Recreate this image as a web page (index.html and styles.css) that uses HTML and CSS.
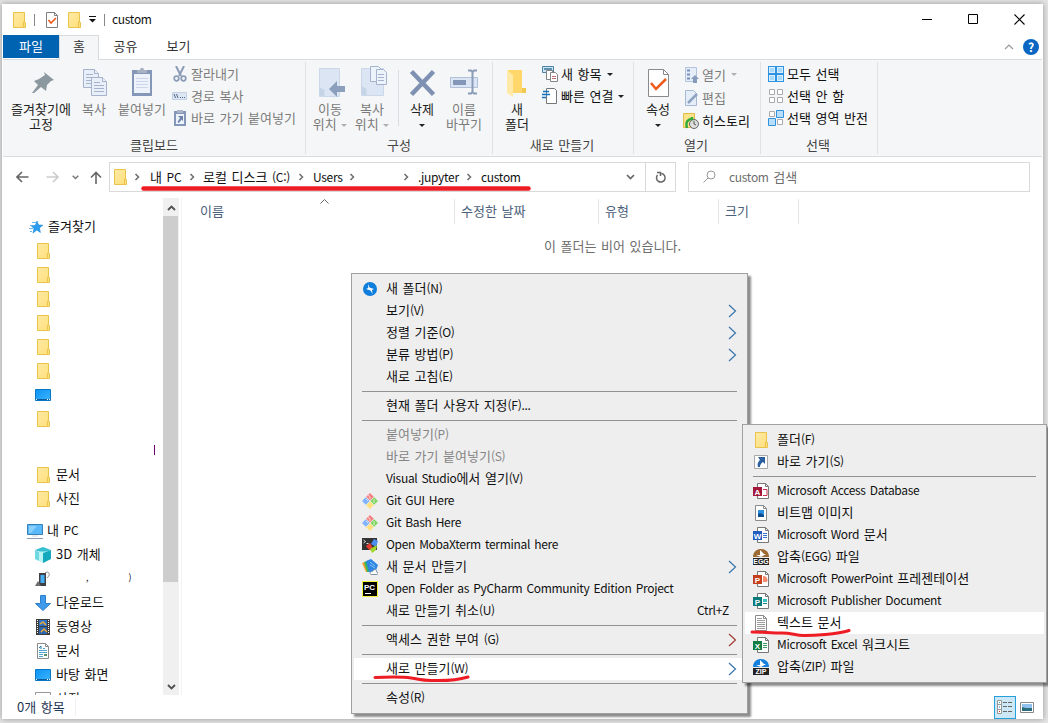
FILE: index.html
```html
<!DOCTYPE html>
<html lang="ko">
<head>
    <meta charset="UTF-8">
    <meta name="viewport" content="width=device-width, initial-scale=1.0">
    <title>custom</title>
    <link rel="stylesheet" href="styles.css">
</head>
<body>

<!-- shared icons -->
<svg class="defs" width="0" height="0">
    <linearGradient id="gFolder" x1="0" y1="0" x2="1" y2="1"><stop offset="0" stop-color="#ffeaa5"/><stop offset="1" stop-color="#ffdf7a"/></linearGradient>
    <linearGradient id="gScreen" x1="0" y1="0" x2="1" y2="1"><stop offset="0" stop-color="#0a94f5"/><stop offset="1" stop-color="#3fb4ff"/></linearGradient>
    <symbol id="folder" viewBox="0 0 16 16">
        <path d="M2.500.5h11v10h1v5h-12z" fill="url(#gFolder)" stroke="#e9c34b"/>
        <path d="M12.500 15v-5h1" fill="none" stroke="#e9c34b"/>
    </symbol>
    <symbol id="desktop" viewBox="0 0 16 16">
        <path d="M.5 2.500h15v11H.5z" fill="url(#gScreen)" stroke="#0b76c4"/>
        <path d="M1 12.500h14" stroke="#0a5c9c"/><path d="M1 12.500h1m10 0h1m1 0h1" stroke="#fff"/>
    </symbol>
    <symbol id="chev" viewBox="0 0 6 8"><path d="M1.500 1l3 3-3 3" fill="none" stroke="#6d6d6d" stroke-width="1.500"/></symbol>
    <symbol id="arrow" viewBox="0 0 9 14"><path d="M1 1l6.500 6L1 13" fill="none" stroke="currentColor" stroke-width="1.200"/></symbol>
    <symbol id="git" viewBox="0 0 16 16">
        <path d="M8 0l3.800 3.800L8 7.600 4.200 3.800z" fill="#f98080"/><path d="M12.200 4.200L16 8l-3.800 3.800L8.400 8z" fill="#80d860"/>
        <path d="M3.800 4.200L7.600 8l-3.800 3.800L0 8z" fill="#80b3ff"/><path d="M8 8.400l3.800 3.800L8 16l-3.800-3.800z" fill="#ffe080"/>
        <path d="M6 2l2 2v2M12 6v4M4 6l2 2" stroke="#eee" stroke-width=".8" fill="none"/>
    </symbol>
    <symbol id="sheet" viewBox="0 0 16 16"><path d="M4.500.5h8l3 3v12h-11z" fill="#fff" stroke="#777"/><path d="M12.500.5v3h3" fill="none" stroke="#777"/></symbol>
    <symbol id="page" viewBox="0 0 16 16"><path d="M2.500.5h8l3 3v12h-11z" fill="#fff" stroke="#8b8b8b"/><path d="M10.500.5v3h3" fill="none" stroke="#8b8b8b"/></symbol>
    <symbol id="check" viewBox="0 0 12 16"><path d="M.5.5h8l3 3v12H.5z" fill="#fff" stroke="#7d7d7d"/><path d="M8.500.5v3h3" fill="none" stroke="#7d7d7d"/><path d="M2.500 8l2.500 3 5-5" fill="none" stroke="#ee5a1c" stroke-width="1.700"/></symbol>
</svg>

<div class="window">
    <div class="titlebar">
        <svg class="i16" width="16" height="16"><use href="#folder"/></svg>
        <span class="bar first"></span>
        <svg class="checkicon" width="12" height="16"><use href="#check"/></svg>
        <svg class="i16 second" width="16" height="16"><use href="#folder"/></svg>
        <svg class="quick" width="8" height="7" viewBox="0 0 8 7"><path d="M0 .5h7" stroke="#111"/><path d="M0 3h7L3.500 6.500z" fill="#111"/></svg>
        <span class="bar"></span>
        <span class="title en">custom</span>
        <div class="controls">
            <svg width="11" height="11" viewBox="0 0 11 11"><path d="M0 5.500h10" stroke="#000"/></svg>
            <svg width="11" height="11" viewBox="0 0 11 11"><path d="M.5.5h9v9h-9z" fill="none" stroke="#000"/></svg>
            <svg width="11" height="11" viewBox="0 0 11 11"><path d="M.5.5l10 10m0-10l-10 10" stroke="#000" stroke-width="1.100"/></svg>
        </div>
    </div>

    <div class="tabs">
        <div class="tab file">파일</div>
        <div class="tab active">홈</div>
        <div class="tab">공유</div>
        <div class="tab">보기</div>
        <div class="tabtools">
            <svg width="10" height="6" viewBox="0 0 10 6"><path d="M1 5l4-4 4 4" fill="none" stroke="#999" stroke-width="1.200"/></svg>
            <span class="help">?</span>
        </div>
    </div>

    <div class="ribbon">
        <div class="group clipboard">
            <div class="tools">
                <div class="big w70">
                    <svg width="32" height="32" viewBox="0 0 32 32"><path d="M19 6l10 8-3 1-4 4-1 6-5-4-7 6-2 0 6-8-4-4 5-2 6-4z" fill="#8b989f"/></svg>
                    <span>즐겨찾기에<br>고정</span>
                </div>
                <div class="big off w36">
                    <svg width="32" height="32" viewBox="0 0 32 32"><g fill="#e9eff8" stroke="#a5b4cc"><path d="M5.500 3.500h11l4 4v14h-15z"/><path d="M16.500 3.500v4h4M8 8.500h7m-7 3h10m-10 3h10m-10 3h10"/><path d="M13.500 11.500h11l4 4v14h-15z"/><path d="M24.500 11.500v4h4M16 16.500h6m-6 3h10m-10 3h10m-10 3h10"/></g></svg>
                    <span>복사</span>
                </div>
                <div class="big off w60">
                    <svg width="32" height="32" viewBox="0 0 32 32"><path d="M6 4h20v26H6z" fill="#8497b8"/><path d="M8 8h16v19H8z" fill="#eef3fb"/><path d="M10 12.500h12m-12 3h12m-12 3h12m-12 3h12" stroke="#cbd7e9"/><path d="M11 7V4h3c0-3 4-3 4 0h3v3z" fill="#a7b2c2"/></svg>
                    <span>붙여넣기</span>
                </div>
                <div class="smalls off">
                    <div><svg width="16" height="16" viewBox="0 0 16 16"><path d="M4 0l5 10M12 0L7 10" stroke="#8b9cb8" stroke-width="2"/><g fill="none" stroke="#8b9cb8" stroke-width="1.700"><circle cx="4.500" cy="12.500" r="2.300"/><circle cx="11.500" cy="12.500" r="2.300"/></g></svg>잘라내기</div>
                    <div><svg width="16" height="16" viewBox="0 0 16 16"><path d="M.5 4.500h14v7H.5z" fill="#dde6f3" stroke="#c4d1e4"/><path d="M2 6l1.500 4M4.500 6L6 10M8 9.500h1m1 0h1m1 0h1" stroke="#51658c"/></svg>경로 복사</div>
                    <div><svg width="16" height="16" viewBox="0 0 16 16"><path d="M2 1h12v15H2z" fill="#8497b8"/><path d="M4 4h8v10H4z" fill="#eef3fb"/><path d="M5 0h6v3H5z" fill="#a9b5c7"/><path d="M6 6h5v5L9.500 9.500 7 13 5.500 12 8 8z" fill="#6d83ab"/></svg>바로 가기 붙여넣기</div>
                </div>
            </div>
            <div class="label">클립보드</div>
        </div>

        <div class="group organize">
            <div class="tools">
                <div class="big off w42">
                    <svg width="32" height="32" viewBox="0 0 32 32"><path d="M5.500 2.500h20v28h-20z" fill="#dce5f3" stroke="#cbd8ea"/><path d="M5.500 21l5 3v6h-5z" fill="#c6d4e8"/><path d="M15 23l8-8v5h8v6h-8v5z" fill="#8c9fbd"/></svg>
                    <span>이동<br>위치 <i class="dd"></i></span>
                </div>
                <div class="big off w42">
                    <svg width="32" height="32" viewBox="0 0 32 32"><path d="M5.500 2.500h22v27h-22z" fill="#dce5f3" stroke="#cbd8ea"/><path d="M5.500 20l5 3v6h-5z" fill="#c6d4e8"/><g fill="#edf3fb" stroke="#a5b4cc"><path d="M14.500.5h8l3 3v12h-11z"/><path d="M20.500 3.500h7l3 3v12h-10z"/><path d="M22 8.500h6m-6 3h6m-6 3h6"/></g></svg>
                    <span>복사<br>위치 <i class="dd"></i></span>
                </div>
                <div class="vline"></div>
                <div class="big w46">
                    <svg width="32" height="32" viewBox="0 0 32 32"><path d="M5.500 5.500l22 23m0-23l-22 23" stroke="#7f91b2" stroke-width="4.500"/></svg>
                    <span>삭제<br><i class="dd"></i></span>
                </div>
                <div class="big off w38">
                    <svg width="32" height="32" viewBox="0 0 32 32"><path d="M2.500 11.500h27v10h-27z" fill="#dce5f3" stroke="#b1c1da"/><path d="M5 14h13v5H5z" fill="#8497b8"/><path d="M20 4.500h3l1.500 1.500v20L23 27.500h-3m9-23h-3L24.500 6m0 20l1.500 1.500h3" fill="none" stroke="#8b9cb9" stroke-width="2"/></svg>
                    <span>이름<br>바꾸기</span>
                </div>
            </div>
            <div class="label">구성</div>
        </div>

        <div class="group create">
            <div class="tools">
                <div class="big w36">
                    <svg width="32" height="32" viewBox="0 0 32 32"><path d="M7 4h14v18l4 1v4H7z" fill="#ffd76b"/><path d="M6 4l6 5v22l-6-4z" fill="#ffe9a6"/><path d="M21 22h4v5h-4z" fill="#f2c94f"/></svg>
                    <span>새<br>폴더</span>
                </div>
                <div class="smalls">
                    <div><svg width="16" height="16" viewBox="0 0 16 16"><path d="M.5.5h11v6H.5z" fill="#cce6f7" stroke="#4e82a3"/><path d="M2 3h8" stroke="#5e91b0" stroke-width="2"/><g fill="#fff" stroke="#858585"><path d="M4.500 4.500h6v9h-6z"/><path d="M8.500 6.500h5l2 2v7h-7z"/></g><path d="M10 10.500h4m-4 2h4" stroke="#b86f75"/></svg>새 항목<i class="dd"></i></div>
                    <div><svg width="16" height="16" viewBox="0 0 16 16"><path d="M4.500.5h8l2 2v13h-10z" fill="#fff" stroke="#777"/><path d="M0 6.500h8M1 3.500h6M0 9.500h4" stroke="#1673c0" stroke-width="1.400"/></svg>빠른 연결<i class="dd"></i></div>
                </div>
            </div>
            <div class="label">새로 만들기</div>
        </div>

        <div class="group open">
            <div class="tools">
                <div class="big w36">
                    <svg width="32" height="32" viewBox="0 0 32 32"><path d="M6.500 3.500h15l5 5v22h-20z" fill="#fff" stroke="#8a8a8a"/><path d="M21.500 3.500v5h5" fill="none" stroke="#8a8a8a"/><path d="M9 17l5 6 10-10" fill="none" stroke="#ee5a1c" stroke-width="2.500"/></svg>
                    <span>속성<br><i class="dd"></i></span>
                </div>
                <div class="smalls">
                    <div class="off"><svg width="16" height="16" viewBox="0 0 16 16"><path d="M2.500.5h11v14h-11z" fill="#e5edf8" stroke="#b3c3dc"/><path d="M4 3.500h3m-3 4h3m-3 4h3" stroke="#7890b8" stroke-width="2"/><path d="M12 8l4 4h-2v4h-4v-4H8z" fill="#879bbd"/></svg>열기<i class="dd"></i></div>
                    <div class="off"><svg width="16" height="16" viewBox="0 0 16 16"><path d="M2.500.5h8l3 3v12h-11z" fill="#e5edf8" stroke="#a8b9d4"/><path d="M5 13l9-9" stroke="#8ea2c2" stroke-width="2.500"/></svg>편집</div>
                    <div><svg width="16" height="16" viewBox="0 0 16 16"><path d="M.5.5h11v14H.5z" fill="#ffe38b" stroke="#e3bd4a"/><circle cx="11" cy="11" r="4.500" fill="#dedede" stroke="#666"/><path d="M11 8v3l2 1" fill="none" stroke="#555"/><path d="M4 15c-2-7 2-9 5-9V4" fill="none" stroke="#35aa3c" stroke-width="2.500"/></svg>히스토리</div>
                </div>
            </div>
            <div class="label">열기</div>
        </div>

        <div class="group select">
            <div class="tools">
                <div class="smalls">
                    <div><svg width="16" height="16" viewBox="0 0 16 16"><path d="M0 0h16v16H0z" fill="#2f92e0"/><path d="M1 1h6v6H1zM9 1h6v6H9zM1 9h6v6H1zM9 9h6v6H9z" fill="#d9efff"/><path d="M2 2h4v4H2zM10 2h4v4h-4zM2 10h4v4H2zM10 10h4v4h-4z" fill="#a9d9fb"/></svg>모두 선택</div>
                    <div><svg width="16" height="16" viewBox="0 0 16 16"><path d="M1.500 1.500h5v5h-5zM9.500 1.500h5v5h-5zM1.500 9.500h5v5h-5zM9.500 9.500h5v5h-5z" fill="#fff" stroke="#ababab"/></svg>선택 안 함</div>
                    <div><svg width="16" height="16" viewBox="0 0 16 16"><path d="M1.500 1.500h5v5h-5zM9.500 9.500h5v5h-5z" fill="#fff" stroke="#ababab"/><path d="M8.500.5h7v7h-7zM.5 8.500h7v7h-7z" fill="#b7dffb" stroke="#2f92e0"/></svg>선택 영역 반전</div>
                </div>
            </div>
            <div class="label">선택</div>
        </div>
    </div>

    <div class="navbar">
        <div class="navbtns">
            <svg width="13" height="12" viewBox="0 0 13 12"><path d="M12.500 6H1.500M6 1L1 6l5 5" fill="none" stroke="#666" stroke-width="1.600"/></svg>
            <svg width="13" height="12" viewBox="0 0 13 12"><path d="M.5 6h11M7 1l5 5-5 5" fill="none" stroke="#ccc" stroke-width="1.600"/></svg>
            <svg width="7" height="5" viewBox="0 0 7 5"><path d="M.7.7l2.800 2.800L6.300.7" fill="none" stroke="#777" stroke-width="1.500"/></svg>
            <svg width="12" height="13" viewBox="0 0 12 13"><path d="M6 13V1.500M1 6.500l5-5 5 5" fill="none" stroke="#666" stroke-width="1.600"/></svg>
        </div>
        <div class="address">
            <svg class="i16" width="16" height="16"><use href="#folder"/></svg>
            <svg class="chev c1" width="6" height="8"><use href="#chev"/></svg>
            <span class="crumb pc">내 <span class="en">PC</span></span>
            <svg class="chev" width="6" height="8"><use href="#chev"/></svg>
            <span class="crumb disk">로컬 디스크 <span class="en">(C:)</span></span>
            <svg class="chev" width="6" height="8"><use href="#chev"/></svg>
            <span class="crumb users en">Users</span>
            <svg class="chev" width="6" height="8"><use href="#chev"/></svg>
            <span class="crumb hidden"></span>
            <svg class="chev" width="6" height="8"><use href="#chev"/></svg>
            <span class="crumb jup en">.jupyter</span>
            <svg class="chev" width="6" height="8"><use href="#chev"/></svg>
            <span class="crumb en">custom</span>
            <svg class="drop" width="9" height="6" viewBox="0 0 9 6"><path d="M1 1l3.500 3.500L8 1" fill="none" stroke="#666" stroke-width="1.700"/></svg>
            <span class="refresh"><svg width="12" height="13" viewBox="0 0 12 13"><path d="M2.500 4a4.300 4.300 0 1 0 4-1.500M2 1.500h3.500V5" fill="none" stroke="#666" stroke-width="1.500"/></svg></span>
            <svg class="mark" width="390" height="6" viewBox="0 0 390 6"><path d="M2.500 2.500h385" stroke="#ee1c25" stroke-width="4.500" stroke-linecap="round"/></svg>
        </div>
        <div class="search">
            <svg width="13" height="13" viewBox="0 0 13 13"><circle cx="8" cy="5" r="4" fill="none" stroke="#999"/><path d="M5 8l-4.500 4.500" stroke="#999"/></svg>
            <span><span class="en">custom</span> 검색</span>
        </div>
    </div>

    <div class="body">
        <div class="tree">
            <div class="row root"><svg width="16" height="16" viewBox="0 0 16 16"><path d="M9 2l1.500 4 4.300.2-3.400 2.700 1 4.600-3.600-2.500L5 14l1-4.500L3.500 7l4-.8z" fill="#2a9df0" stroke="#1784d8" stroke-width=".6"/><path d="M4 3.500h4M2 6.500h3M1 9.500h4M2 12.500h2" stroke="#63b7ee"/></svg>즐겨찾기</div>
            <div class="row"><svg width="16" height="16"><use href="#folder"/></svg></div>
            <div class="row"><svg width="16" height="16"><use href="#folder"/></svg></div>
            <div class="row"><svg width="16" height="16"><use href="#folder"/></svg></div>
            <div class="row"><svg width="16" height="16"><use href="#folder"/></svg></div>
            <div class="row"><svg width="16" height="16"><use href="#folder"/></svg></div>
            <div class="row"><svg width="16" height="16"><use href="#folder"/></svg></div>
            <div class="row"><svg width="16" height="16"><use href="#desktop"/></svg></div>
            <div class="row"><svg width="16" height="16"><use href="#folder"/></svg></div>
            <div class="rest"><span></span></div>
            <div class="row"><svg width="16" height="16"><use href="#folder"/></svg>문서</div>
            <div class="row"><svg width="16" height="16"><use href="#folder"/></svg>사진</div>
            <div class="row root pcroot"><svg width="16" height="16" viewBox="0 0 16 16"><path d="M.5 1.500h15v10H.5z" fill="#58b8f8" stroke="#3580b4"/><path d="M2 3h8L4 10H2z" fill="#8bd0fc"/><path d="M5 13h6" stroke="#ccd6e0"/><path d="M0 15.500h16" stroke="#8a9db3"/></svg><span>내 <span class="en">PC</span></span></div>
            <div class="row"><svg width="16" height="16" viewBox="0 0 16 16"><path d="M0 3l8-3 8 3-8 3z" fill="#35bfd0"/><path d="M0 3l4 2v9l-4-2z" fill="#6fd9e2"/><path d="M4 4.500h8V14l-4 2-4-2z" fill="#bdf3f5"/><path d="M16 3L8 6v10l8-4z" fill="#14a9bd"/></svg>3D 개체</div>
            <div class="row phone"><svg width="16" height="16" viewBox="0 0 16 16"><path d="M4 2h7v13H4z" fill="#3e4247"/><path d="M5.500 4h4v8h-4z" fill="#45aef5"/><path d="M10 2c4-3 6 2 2 5" fill="none" stroke="#8b8b8b"/><path d="M0 15l3-5 3 5z" fill="#6d6d6d"/></svg><span class="frag">,</span><span class="frag end">)</span></div>
            <div class="row"><svg width="16" height="16" viewBox="0 0 16 16"><path d="M5.500.5h5v8h5L8 15.500.5 8.500h5z" fill="#3d9aec" stroke="#2f7fc9"/></svg>다운로드</div>
            <div class="row"><svg width="16" height="16" viewBox="0 0 16 16"><path d="M1 0h14v16H1z" fill="#3c3c3c"/><path d="M4 1h8v6H4z" fill="#3274c4"/><path d="M4 8h8v7H4z" fill="#2c66b0"/><path d="M5 5l3-2 3 3M6 13l3-3 3 3" stroke="#e4a93a" stroke-width="1.500" fill="none"/><path d="M2.500 1v14M13.500 1v14" stroke="#fff" stroke-dasharray="1 1"/></svg>동영상</div>
            <div class="row"><svg width="16" height="16"><use href="#page"/><path d="M4 7.500h8M4 9.500h8M4 11.500h4M4 13.500h4M8 5.500h2" stroke="#4ba3cf"/><path d="M4 5l2-2v3" stroke="#2478aa" fill="none"/><path d="M9 11h3v2H9z" fill="#57906b"/></svg>문서</div>
            <div class="row"><svg width="16" height="16"><use href="#desktop"/></svg>바탕 화면</div>
            <div class="row"><svg width="16" height="16" viewBox="0 0 16 16"><path d="M.5 1.500h15v12H.5z" fill="#fff" stroke="#999"/></svg>사진</div>
        </div>
        <div class="scroll">
            <svg width="9" height="6" viewBox="0 0 9 6"><path d="M1 5l3.500-3.500L8 5" fill="none" stroke="#505050" stroke-width="1.800"/></svg>
            <div class="thumb"></div>
            <svg width="9" height="6" viewBox="0 0 9 6"><path d="M1 1l3.500 3.500L8 1" fill="none" stroke="#505050" stroke-width="1.800"/></svg>
        </div>
        <div class="files">
            <div class="cols">
                <div class="c-name">이름<svg width="9" height="5" viewBox="0 0 9 5"><path d="M.5 4.500l4-4 4 4" fill="none" stroke="#666"/></svg></div>
                <div class="c-date">수정한 날짜</div>
                <div class="c-type">유형</div>
                <div class="c-size">크기</div>
            </div>
            <div class="empty">이 폴더는 비어 있습니다.</div>
        </div>
    </div>

    <div class="status">
        <span class="count">0개 항목</span>
        <div class="views">
            <span class="view on"><svg width="16" height="14" viewBox="0 0 16 14"><path d="M.5.500h4v13h-4zM.5 4.500h4M.5 9.500h4" fill="#fff" stroke="#999"/><path d="M6 2.500h4m1 0h4m-9 4h4m1 0h4m-9 5h4m1 0h4" stroke="#666"/><path d="M2 2.500h1" stroke="#3a9"/><path d="M2 7h1" stroke="#27f"/><path d="M2 11.500h1" stroke="#e22"/></svg></span>
            <span class="view"><svg width="14" height="11" viewBox="0 0 14 11"><path d="M.5.5h13v10H.5z" fill="#fff" stroke="#888"/><path d="M2 2h10v7H2z" fill="#8fc2ee"/><path d="M2 5l4 1 6 0v3H2z" fill="#2c6d7d"/></svg></span>
        </div>
    </div>
</div>

<div class="menu main">
    <div class="item"><svg class="ic" width="16" height="16" viewBox="0 0 16 16"><circle cx="8" cy="8" r="7" fill="#0f7ddb"/><path d="M6 3l1.500 3.500L12 8l-2 1 .5 4L8.500 9.500 4 8l2.300-1z" fill="#fff"/></svg>새 폴더<span class="en">(N)</span></div>
    <div class="item">보기<span class="en">(V)</span><svg class="sub" width="9" height="14"><use href="#arrow"/></svg></div>
    <div class="item">정렬 기준<span class="en">(O)</span><svg class="sub" width="9" height="14"><use href="#arrow"/></svg></div>
    <div class="item">분류 방법<span class="en">(P)</span><svg class="sub" width="9" height="14"><use href="#arrow"/></svg></div>
    <div class="item">새로 고침<span class="en">(E)</span></div>
    <hr>
    <div class="item">현재 폴더 사용자 지정<span class="en">(F)...</span></div>
    <hr>
    <div class="item off">붙여넣기<span class="en">(P)</span></div>
    <div class="item off">바로 가기 붙여넣기<span class="en">(S)</span></div>
    <div class="item"><span class="en">Visual Studio</span>에서 열기<span class="en">(V)</span></div>
    <div class="item"><svg class="ic" width="16" height="16"><use href="#git"/></svg><span class="en">Git GUI Here</span></div>
    <div class="item"><svg class="ic" width="16" height="16"><use href="#git"/></svg><span class="en">Git Bash Here</span></div>
    <div class="item"><svg class="ic" width="16" height="16" viewBox="0 0 16 16"><path d="M0 1h15v12H0z" fill="#333"/><path d="M1.500 3l2 1.500-2 1.500M4.500 6.500h2" stroke="#ddd" fill="none"/><path d="M4 9l4-3 3 5-4 2z" fill="#e63b32"/><path d="M9 7l3-5 4 2-2 6z" fill="#4b8df0"/><path d="M8 12l7-4-1 5-4 3z" fill="#9ed62c"/></svg><span class="en">Open MobaXterm terminal here</span></div>
    <div class="item"><svg class="ic" width="16" height="16" viewBox="0 0 16 16"><path d="M0 4l3-1 3 10-2 0z" fill="#f0a22c"/><path d="M2 3l3-1 3 11-3 0z" fill="#38b45e"/><path d="M4 2l5-2 7 6-3 8-6-1z" fill="#2d86e3"/><path d="M8 3l5 4M8 6l5 3" stroke="#8ac3f7"/><path d="M9 15.500c-2-1 0-4 1.500-3 1-3 5-2 4 .5 2 0 2 2 .5 2.500z" fill="#fff" stroke="#8092a8"/></svg>새 문서 만들기<svg class="sub" width="9" height="14"><use href="#arrow"/></svg></div>
    <div class="item"><svg class="ic" width="16" height="16" viewBox="0 0 16 16"><path d="M.5.5h15v15H.5z" fill="#000" stroke="#f7f23a"/><text x="2" y="9" class="ictext pc">PC</text><path d="M3 12.500h6" stroke="#fff"/></svg><span class="en">Open Folder as PyCharm Community Edition Project</span></div>
    <div class="item">새로 만들기 취소<span class="en">(U)</span><span class="key en">Ctrl+Z</span></div>
    <hr>
    <div class="item">액세스 권한 부여 <span class="en">(G)</span><svg class="sub red" width="9" height="14"><use href="#arrow"/></svg></div>
    <hr>
    <div class="item hover">새로 만들기<span class="en">(W)</span><svg class="sub" width="9" height="14"><use href="#arrow"/></svg>
        <svg class="mark" width="98" height="8" viewBox="0 0 98 8"><path d="M2 2.500C15 2 28 1.500 38 3s10 2.500 20 2.500 22 1 37-3.500" fill="none" stroke="#ee1c25" stroke-width="3" stroke-linecap="round"/></svg>
    </div>
    <hr>
    <div class="item">속성<span class="en">(R)</span></div>
</div>

<div class="menu new">
    <div class="item"><svg class="ic" width="16" height="16"><use href="#folder"/></svg>폴더<span class="en">(F)</span></div>
    <div class="item"><svg class="ic" width="16" height="16" viewBox="0 0 16 16"><path d="M1.500 1.500h13v13h-13z" fill="#fff" stroke="#a9a9a9"/><path d="M5 3h7v7l-2-2c-2 1-3 3-3 5H5c-1-3 0-5 2-7z" fill="#2c5f9e"/></svg>바로 가기<span class="en">(S)</span></div>
    <hr>
    <div class="item"><svg class="ic" width="16" height="16"><use href="#sheet"/><path d="M10 6.500h4v6h-4" fill="none" stroke="#c8334f"/><path d="M0 4h9v9H0z" fill="#a4173a"/><text x="4.500" y="11.500" class="ictext">A</text></svg><span class="en">Microsoft Access Database</span></div>
    <div class="item"><svg class="ic" width="16" height="16"><use href="#page"/><path d="M5 5h6v7H5z" fill="#2b8fe0"/><path d="M5 9l2-1 4 2v2H5z" fill="#0a4a8e"/></svg>비트맵 이미지</div>
    <div class="item"><svg class="ic" width="16" height="16"><use href="#sheet"/><path d="M10 6.500h4m-4 2h4m-4 2h4" stroke="#3a77cc"/><path d="M0 4h9v9H0z" fill="#1f5cbd"/><text x="4.500" y="11.500" class="ictext">W</text></svg><span class="en">Microsoft Word</span> 문서</div>
    <div class="item"><svg class="ic" width="16" height="16" viewBox="0 0 16 16"><path d="M0 8C0-2.600 16-2.600 16 8z" fill="#9b6b33"/><path d="M7 1l4 4h2L8 8 3 6h4z" fill="#fff"/><path d="M0 9h16v7H0z" fill="#222"/><text x="8" y="15" class="ictext zip">EGG</text></svg>압축<span class="en">(EGG)</span> 파일</div>
    <div class="item"><svg class="ic" width="16" height="16"><use href="#sheet"/><path d="M10 5v6h4a4 4 0 0 0-4-6" fill="#f58d6e"/><path d="M0 4h9v9H0z" fill="#c43e1c"/><text x="4.500" y="11.500" class="ictext">P</text></svg><span class="en">Microsoft PowerPoint</span> 프레젠테이션</div>
    <div class="item"><svg class="ic" width="16" height="16"><use href="#sheet"/><path d="M10 6h4v3h-4z" fill="#3bc0c3"/><path d="M10 10.500h4" stroke="#1b8587"/><path d="M0 4h9v9H0z" fill="#067a7a"/><text x="4.500" y="11.500" class="ictext">P</text></svg><span class="en">Microsoft Publisher Document</span></div>
    <div class="item hover"><svg class="ic" width="16" height="16"><use href="#page"/><path d="M4 3.500h5M4 5.500h8M4 7.500h8M4 9.500h8M4 11.500h8M4 13.500h8" stroke="#9c9c9c"/></svg>텍스트 문서
        <svg class="mark" width="101" height="9" viewBox="0 0 101 9"><path d="M2 3c10 0 20 1 30 1s13 2.500 22 2.500 33-1 45-5" fill="none" stroke="#ee1c25" stroke-width="3" stroke-linecap="round"/></svg>
    </div>
    <div class="item"><svg class="ic" width="16" height="16"><use href="#sheet"/><path d="M10 6.500h4m-4 2h4m-4 2h4" stroke="#3f9960"/><path d="M0 4h9v9H0z" fill="#107c41"/><text x="4.500" y="11.500" class="ictext">X</text></svg><span class="en">Microsoft Excel</span> 워크시트</div>
    <div class="item"><svg class="ic" width="16" height="16" viewBox="0 0 16 16"><path d="M0 8C0-2.600 16-2.600 16 8z" fill="#1681dc"/><path d="M7 1l4 4h2L8 8 3 6h4z" fill="#fff"/><path d="M0 9h16v7H0z" fill="#222"/><text x="8" y="15" class="ictext zip">ZIP</text></svg>압축<span class="en">(ZIP)</span> 파일</div>
</div>

</body>
</html>
```
FILE: styles.css
```css
* {
    box-sizing: border-box;
}

body {
    margin: 0;
    padding: 4px 5px 4px 2px;
    height: 723px;
    overflow: hidden;
    background-color: #e4e4e4;
    font-family: "Noto Sans CJK KR", "Noto Sans", sans-serif;
    font-size: 13px;
    line-height: 16px;
    word-spacing: 1px;
    color: #111;
    white-space: nowrap;
}

/* latin text runs narrower than the hangul */
.en {
    font-size: 12px;
    letter-spacing: -0.3px;
}

svg {
    display: block;
    flex: none;
}

.defs {
    position: absolute;
}

.window {
    height: 715px;
    width: 1041px;
    background-color: #fff;
    display: flex;
    flex-direction: column;
    box-shadow: 0 0 6px rgba(0, 0, 0, 0.35);
}

/* title bar */
.titlebar {
    height: 31px;
    display: flex;
    align-items: center;
    padding-left: 9px;
}

.title {
    padding-bottom: 2px;
}

.bar {
    width: 1px;
    height: 12px;
    background-color: #888;
    margin: 0 7px 0 7px;
}

.bar.first {
    margin: 0 11px 0 7px;
}

.second {
    margin: 0 7px 0 8px;
}

.controls {
    margin-left: auto;
    display: flex;
    gap: 35px;
    padding-right: 18px;
}

/* tabs */
.tabs {
    height: 24px;
    display: flex;
    padding-left: 1px;
}

.tab {
    width: 53px;
    text-align: center;
    line-height: 21px;
    color: #333;
}

.tab.file {
    width: 56px;
    height: 23px;
    background-color: #0063b1;
    color: #fff;
}

.tab.active {
    width: 40px;
    height: 25px;
    background-color: #f5f6f7;
    border: 1px solid #dadbdc;
    border-bottom: none;
    line-height: 20px;
    z-index: 1;
}

.tabtools {
    margin-left: auto;
    display: flex;
    align-items: center;
    gap: 9px;
    padding-right: 4px;
}

.help {
    width: 16px;
    height: 16px;
    border-radius: 50%;
    background-color: #0a66c2;
    color: #fff;
    font-weight: bold;
    font-size: 12px;
    text-align: center;
}

/* ribbon */
.ribbon {
    height: 98px;
    display: flex;
    background-color: #f5f6f7;
    border-top: 1px solid #dadbdc;
    border-bottom: 1px solid #dadbdc;
    margin: 0 1px;
    padding-top: 2px;
}

.group {
    height: 92px;
    border-right: 1px solid #e0e1e3;
    display: flex;
    flex-direction: column;
}

.clipboard { width: 303px; }
.organize { width: 187px; }
.create { width: 141px; }
.open { width: 127px; }
.select { width: 117px; }

.clipboard .tools, .organize .tools { padding-left: 3px; }
.create .tools, .open .tools { padding-left: 6px; }
.select .tools { padding-left: 7px; }

.tools {
    flex: 1;
    display: flex;
}

.label {
    height: 15px;
    line-height: 15px;
    text-align: center;
    color: #444;
    margin-bottom: 2px;
}

.create .label, .open .label, .select .label {
    margin-right: 2px;
}

.big {
    display: flex;
    flex-direction: column;
    align-items: center;
    text-align: center;
    line-height: 15px;
    padding-top: 4px;
    color: #222;
}

.big span {
    margin-top: 3px;
}

.off, .big.off {
    color: #7b7b7b;
}

.w36 { width: 36px; }
.w38 { width: 38px; }
.w42 { width: 42px; }
.w46 { width: 46px; }
.w60 { width: 60px; }
.w70 { width: 70px; }

.vline {
    width: 1px;
    height: 56px;
    margin: 8px 0 0 5px;
    background-color: #dcdde0;
}

.dd {
    display: inline-block;
    border: 3px solid transparent;
    border-top-color: #222;
    border-bottom: none;
    vertical-align: 2px;
}

.off .dd {
    border-top-color: #b0b0b0;
}

.smalls > div {
    height: 22px;
    display: flex;
    align-items: center;
    gap: 3px;
}

.smalls {
    padding-top: 1px;
}

.smalls .dd {
    margin-left: 2px;
}

.create .smalls, .open .smalls {
    margin-left: 7px;
}

.open .smalls > div {
    height: 23px;
}

/* address bar */
.navbar {
    height: 41px;
    display: flex;
    align-items: flex-start;
    padding-top: 5px;
}

.navbtns {
    width: 107px;
    height: 30px;
    display: flex;
    align-items: center;
    padding-left: 14px;
}

.navbtns svg:nth-child(2) { margin-left: 17px; }
.navbtns svg:nth-child(3) { margin-left: 13px; }
.navbtns svg:nth-child(4) { margin-left: 11px; }

.address {
    position: relative;
    width: 567px;
    height: 30px;
    border: 1px solid #d9d9d9;
    display: flex;
    align-items: center;
    padding-left: 2px;
}

.chev.c1 {
    margin-left: 6px;
}

.crumb {
    flex: none;
    margin-left: 9px;
    padding-bottom: 1px;
}

.crumb.pc { width: 39px; margin-left: 10px; }
.crumb.disk { width: 95px; margin-left: 8px; }
.crumb.users { width: 36px; }
.crumb.hidden { width: 39px; }
.crumb.jup { width: 48px; }

.drop {
    margin-left: auto;
    margin-right: 10px;
}

.refresh {
    width: 30px;
    height: 28px;
    border-left: 1px solid #d9d9d9;
    display: flex;
    align-items: center;
    justify-content: center;
}

.address .mark {
    position: absolute;
    left: 31px;
    top: 23px;
}

.search {
    width: 342px;
    height: 30px;
    margin-left: 12px;
    border: 1px solid #d9d9d9;
    display: flex;
    align-items: center;
    gap: 13px;
    padding: 0 0 1px 14px;
    color: #6d6d6d;
}

/* content */
.body {
    height: 497px;
    display: flex;
}

.tree {
    width: 161px;
    padding-top: 16px;
    overflow: hidden;
}

.row {
    height: 24px;
    display: flex;
    align-items: center;
    gap: 5px;
    padding-left: 33px;
}

.row svg {
    margin-top: 1px;
}

.row.root {
    padding-left: 26px;
    gap: 4px;
}

.row.pcroot {
    margin-top: 8px;
    padding-left: 25px;
}

.rest {
    height: 32px;
    display: flex;
    justify-content: flex-end;
    align-items: center;
    padding: 8px 8px 0 0;
}

.rest span {
    width: 1px;
    height: 10px;
    background-color: #700070;
}

.frag {
    font-size: 9px;
    margin-left: 30px;
}

.frag.end {
    margin-left: 35px;
}

.scroll {
    width: 16px;
    background-color: #f0f0f0;
    display: flex;
    flex-direction: column;
    align-items: center;
    padding: 7px 0 5px;
}

.thumb {
    width: 15px;
    height: 366px;
    margin: 5px 1px 0 0;
    background-color: #cdcdcd;
}

.scroll svg:last-child {
    margin-top: auto;
}

.files {
    flex: 1;
    border-left: 1px solid #f2f2f2;
    margin-left: 2px;
}

.cols {
    display: flex;
    height: 26px;
    padding-top: 1px;
    line-height: 24px;
    color: #4c607a;
}

.cols div {
    border-right: 1px solid #e5e5e5;
    padding-left: 6px;
}

.cols .c-name { width: 273px; padding-left: 18px; position: relative; }
.c-date { width: 144px; }
.c-type { width: 120px; }
.c-size { width: 80px; }

.c-name svg {
    position: absolute;
    left: 138px;
    top: 0;
}

.empty {
    text-align: center;
    margin-top: 14px;
    color: #6d6d6d;
}

.status {
    height: 24px;
    display: flex;
    align-items: center;
    padding-left: 15px;
    color: #1e3654;
}

.count {
    padding: 0 10px 1px 0;
    border-right: 1px solid #f0f0f0;
}

.views {
    margin-left: auto;
    display: flex;
    align-items: center;
    padding-right: 9px;
    gap: 4px;
}

.view.on {
    width: 22px;
    height: 23px;
    border: 1px solid #26a0da;
    background-color: #cce8f7;
    display: flex;
    align-items: center;
    justify-content: center;
}

/* context menus */
.menu {
    position: absolute;
    background-color: #eee;
    border: 1px solid #a0a0a0;
    padding: 4px 2px;
    box-shadow: 3px 3px 2px rgba(0, 0, 0, 0.45);
}

.menu.main {
    left: 351px;
    top: 273px;
    width: 397px;
}

.menu.new {
    left: 742px;
    top: 424px;
    width: 305px;
}

.item {
    position: relative;
    height: 22px;
    line-height: 19px;
    padding-left: 32px;
}

.item.off {
    color: #858585;
}

.item.hover {
    background-color: #fff;
}

.menu hr {
    height: 1px;
    margin: 3px 8px;
    border: none;
    background-color: #919191;
}

.ic {
    position: absolute;
    left: 8px;
    top: 3px;
}

.sub {
    position: absolute;
    right: 8px;
    top: 4px;
    color: #3975ad;
}

.sub.red {
    color: #a33c35;
}

.key {
    position: absolute;
    right: 16px;
}

.item .mark {
    position: absolute;
    left: 19px;
    top: 17px;
}

.new .item .mark {
    left: 5px;
    top: 17px;
}

.ictext {
    font: bold 8px "Liberation Sans", sans-serif;
    letter-spacing: 0;
    word-spacing: 0;
    fill: #fff;
    text-anchor: middle;
}

.ictext.pc {
    text-anchor: start;
}

.ictext.zip {
    font-size: 7px;
}
```
